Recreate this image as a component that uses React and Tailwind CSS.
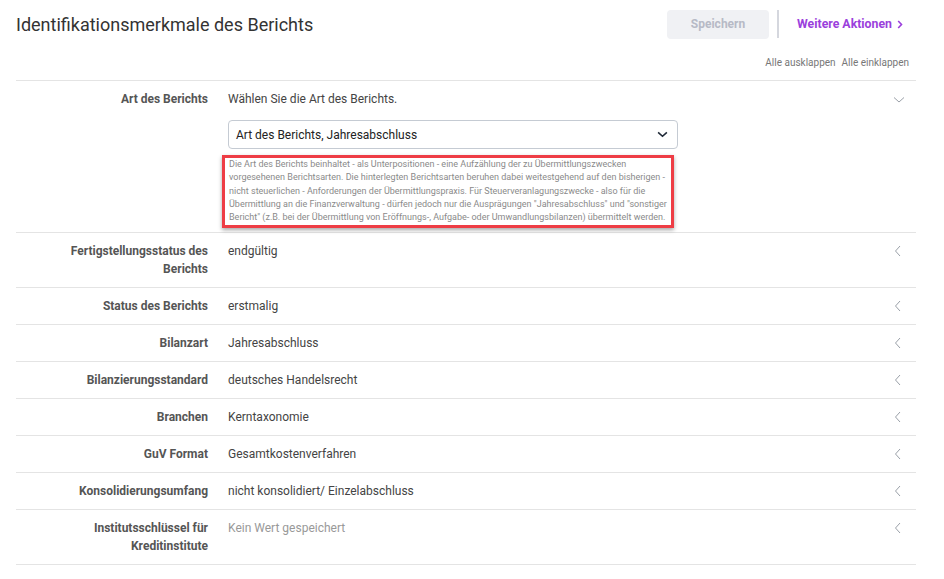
import React from 'react';

const rows = [
  { label: 'Fertigstellungsstatus des Berichts', value: 'endgültig' },
  { label: 'Status des Berichts', value: 'erstmalig' },
  { label: 'Bilanzart', value: 'Jahresabschluss' },
  { label: 'Bilanzierungsstandard', value: 'deutsches Handelsrecht' },
  { label: 'Branchen', value: 'Kerntaxonomie' },
  { label: 'GuV Format', value: 'Gesamtkostenverfahren' },
  { label: 'Konsolidierungsumfang', value: 'nicht konsolidiert/ Einzelabschluss' },
  { label: 'Institutsschlüssel für Kreditinstitute', value: 'Kein Wert gespeichert', empty: true },
];

const helpLines = [
  'Die Art des Berichts beinhaltet - als Unterpositionen - eine Aufzählung der zu Übermittlungszwecken',
  'vorgesehenen Berichtsarten. Die hinterlegten Berichtsarten beruhen dabei weitestgehend auf den bisherigen -',
  'nicht steuerlichen - Anforderungen der Übermittlungspraxis. Für Steuerveranlagungszwecke - also für die',
  'Übermittlung an die Finanzverwaltung - dürfen jedoch nur die Ausprägungen "Jahresabschluss" und "sonstiger',
  'Bericht" (z.B. bei der Übermittlung von Eröffnungs-, Aufgabe- oder Umwandlungsbilanzen) übermittelt werden.',
];

function ChevronLeft() {
  return (
    <svg width="8" height="12" viewBox="0 0 8 12" fill="none" stroke="#9aa0a8" strokeWidth="1">
      <path d="M6 1 L1.5 6 L6 11" />
    </svg>
  );
}

function ChevronDown({ color = '#9aa0a8', w = 12, h = 8, sw = 1 }) {
  return (
    <svg width={w} height={h} viewBox="0 0 12 8" fill="none" stroke={color} strokeWidth={sw}>
      <path d="M1 1.5 L6 6 L11 1.5" />
    </svg>
  );
}

function Label({ children }) {
  return (
    <div className="w-[192px] shrink-0 pl-[30px] text-right font-bold text-[12px] leading-[18px] text-[#555]">
      {children}
    </div>
  );
}

export default function App() {
  return (
    <div className="min-h-[579px] bg-white font-['Roboto',sans-serif]">
      <div className="w-[900px] ml-4">
        {/* header */}
        <div className="flex items-center justify-between h-[48px]">
          <h1 className="text-[18px] text-[#333] font-normal">Identifikationsmerkmale des Berichts</h1>
          <div className="flex items-center mr-[13px]">
            <button className="w-[102px] h-[29px] rounded bg-[#f0f1f4] text-[12px] font-bold text-[#b7bac6]">
              Speichern
            </button>
            <div className="w-[2px] h-[28px] bg-[#d5d7de] ml-[8px]" />
            <button className="ml-[18px] text-[12.3px] font-bold text-[#9b3fdc] flex items-center gap-[5px]">
              Weitere Aktionen
              <svg width="6" height="9" viewBox="0 0 6 9" fill="none" stroke="#9b3fdc" strokeWidth="1.6">
                <path d="M1.2 1 L4.5 4.5 L1.2 8" />
              </svg>
            </button>
          </div>
        </div>

        <div className="flex justify-end gap-[6px] pr-[7px] h-[32px] items-center pb-[3px] text-[10px] text-[#777]">
          <span>Alle ausklappen</span>
          <span>Alle einklappen</span>
        </div>

        <div className="border-t border-[#e4e4e4]">
          {/* expanded row */}
          <div className="flex gap-[20px] pt-[9px] pb-[4px] border-b border-[#e4e4e4]">
            <Label>Art des Berichts</Label>
            <div className="w-[450px]">
              <div className="text-[12px] leading-[18px] text-[#444]">Wählen Sie die Art des Berichts.</div>
              <div className="mt-[12px] h-[29px] border border-[#c5cbd3] rounded flex items-center justify-between pl-[7px] pr-[9px] text-[12px] text-[#222]">
                <span>Art des Berichts, Jahresabschluss</span>
                <ChevronDown color="#1f2937" w={11} h={7} sw={1.8} />
              </div>
              <div className="mt-[6px] ml-[-6px] w-[452px] border-[3px] border-[#ee3d45] shadow-[0_2px_4px_rgba(0,0,0,0.35)] pl-[4px] pt-[0px] pb-[1px]">
                <p className="text-[9px] leading-[13.3px] text-[#8a8a8a] whitespace-nowrap">
                  {helpLines.map((l) => (
                    <span key={l} className="block">{l}</span>
                  ))}
                </p>
              </div>
            </div>
            <div className="ml-auto pr-[11px] pt-[6px]">
              <ChevronDown />
            </div>
          </div>

          {rows.map((r) => (
            <div key={r.label} className="flex gap-[20px] py-[9px] border-b border-[#e4e4e4]">
              <Label>{r.label}</Label>
              <div className={`text-[12px] leading-[18px] ${r.empty ? 'text-[#999]' : 'text-[#444]'}`}>{r.value}</div>
              <div className="ml-auto pr-[14px] pt-[3px]">
                <ChevronLeft />
              </div>
            </div>
          ))}
        </div>
      </div>
    </div>
  );
}
